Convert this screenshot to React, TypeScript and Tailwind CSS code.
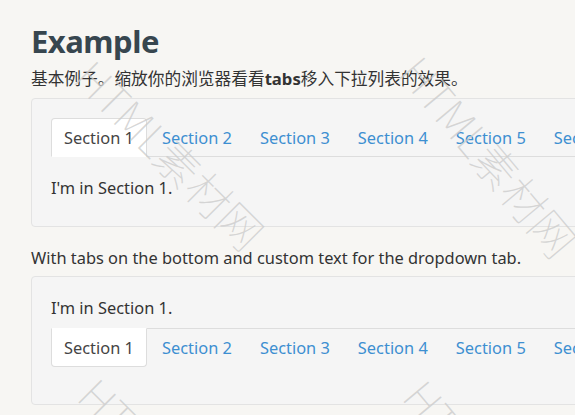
import React from "react";

const tabs = ["Section 1", "Section 2", "Section 3", "Section 4", "Section 5", "Section 6"];

function TabBar({ bottom }: { bottom?: boolean }) {
  return (
    <ul className={`flex ${bottom ? "border-t" : "border-b"} border-[#dddddd]`}>
      {tabs.map((t, i) => (
        <li key={t} className={`mr-[2px] ${bottom ? "-mt-px" : "-mb-px"}`}>
          <span
            className={`block h-[39px] px-[12px] leading-[38px] whitespace-nowrap ${
              i === 0
                ? `bg-white text-[#444] border border-[#dddddd] ${bottom ? "border-t-transparent rounded-b" : "border-b-transparent rounded-t"}`
                : "text-[#3d8fd1] border border-transparent"
            }`}
          >
            {t}
          </span>
        </li>
      ))}
    </ul>
  );
}

// faint diagonal "HTML素材网" watermark laid over the page
function Watermark({ className }: { className: string }) {
  return (
    <div
      className={`pointer-events-none absolute whitespace-nowrap text-[44px] leading-none font-thin text-[#cccccc]/80 origin-top-left ${className}`}
      style={{ fontFamily: '"Noto Sans CJK SC", sans-serif' }}
    >
      HTML素材网
    </div>
  );
}

export default function App() {
  return (
    <div
      className="relative w-[575px] h-[415px] overflow-hidden bg-[#f7f6f3] text-[16.4px] text-[#333]"
      style={{ fontFamily: '"Noto Sans", "Noto Sans CJK SC", sans-serif' }}
    >
      <div className="w-[760px] pl-[31px] pt-[21px]">
        <h1 className="text-[31px] font-bold leading-[40px] tracking-[-0.5px] text-[#37464f]">Example</h1>
        <p className="mt-[5px] text-[16.7px] leading-[26px]">
          基本例子。缩放你的浏览器看看<b>tabs</b>移入下拉列表的效果。
        </p>

        <div className="mt-[6px] rounded border border-[#e3e3e3] bg-[#f5f5f5] p-[19px] pb-[26px]">
          <TabBar />
          <p className="mt-[19px] leading-[24px]">I'm in Section 1.</p>
        </div>

        <p className="mt-[19px] leading-[24px]">
          With tabs on the bottom and custom text for the dropdown tab.
        </p>

        <div className="mt-[6px] rounded border border-[#e3e3e3] bg-[#f5f5f5] p-[19px] pb-[37px]">
          <p className="mb-[8px] leading-[24px]">I'm in Section 1.</p>
          <TabBar bottom />
        </div>
      </div>

      <Watermark className="left-[100px] top-[52px] rotate-[45deg]" />
      <Watermark className="left-[428px] top-[48px] rotate-[50deg]" />
      <Watermark className="left-[104px] top-[370px] rotate-[45deg]" />
      <Watermark className="left-[432px] top-[372px] rotate-[50deg]" />
    </div>
  );
}
